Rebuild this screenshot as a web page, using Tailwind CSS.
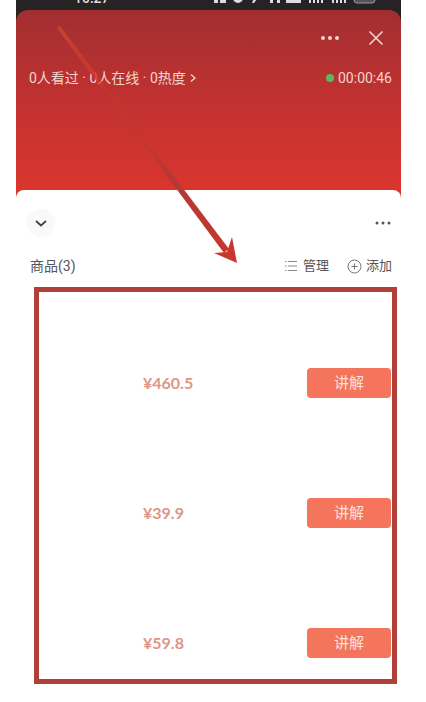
<!DOCTYPE html>
<html lang="zh-CN">
  <head>
    <meta charset="UTF-8" />
    <meta name="viewport" content="width=device-width, initial-scale=1.0" />
    <title>直播商品</title>
    <script src="https://cdn.jsdelivr.net/npm/@tailwindcss/browser@4"></script>
  </head>
  <body class="min-h-screen bg-white font-['Roboto','Noto_Sans_CJK_SC',sans-serif] text-[#555]">
    <div class="relative ml-4 mr-[25px] pb-4">
      <!-- red live header -->
      <div class="bg-[#272223]">
        <div class="flex h-[10px] items-end justify-between overflow-hidden pb-1 pl-[58px] pr-6 text-[#ddd]">
          <span class="text-sm leading-4 font-medium">10:27</span>
          <svg class="h-4 w-[164px] shrink-0" viewBox="0 0 164 16" fill="currentColor">
            <path d="M1 4h4v9H1zM7 4h6v9H7z" />
            <circle cx="25" cy="8" r="5" />
            <path d="M39 13l2-5 3 1-3 4zM57 10h3v3h-3zM64 10h3v3h-3zM73 4h15v9H73z" />
            <path d="M96 7h2v6h-2zM100 5h2v8h-2zM104 4h2v9h-2zM108 3h2v10h-2zM119 7h2v6h-2zM123 5h2v8h-2zM127 4h2v9h-2zM131 3h2v10h-2z" />
            <rect x="141" y="3" width="21" height="10" rx="3" fill="#555" stroke="#999" />
          </svg>
        </div>
        <header class="rounded-t-xl bg-linear-to-b from-[#a22e30] via-[#c23230] to-[#dc362e] px-[13px] pt-4 pb-[110px] text-[#f4d5ce]">
          <div class="flex h-6 items-center justify-end gap-7 pr-1">
            <button aria-label="更多">
              <svg class="h-5 w-5" viewBox="0 0 20 20" fill="currentColor">
                <circle cx="3" cy="10" r="2" />
                <circle cx="10" cy="10" r="2" />
                <circle cx="17" cy="10" r="2" />
              </svg>
            </button>
            <button aria-label="关闭">
              <svg class="h-4 w-4" viewBox="0 0 16 16" fill="none" stroke="currentColor" stroke-width="1.6">
                <path d="M1.500 1.500l13 13M14.500 1.500l-13 13" />
              </svg>
            </button>
          </div>
          <div class="-mr-1 mt-[18px] flex h-5 items-center justify-between text-sm">
            <a href="#" class="flex items-center gap-1">
              <span>0人看过 · 0人在线 · 0热度</span>
              <svg class="h-2 w-1.5" viewBox="0 0 6 8" fill="none" stroke="currentColor" stroke-width="1.3">
                <path d="M1 0.500L5 4L1 7.500" />
              </svg>
            </a>
            <div class="flex items-center gap-1">
              <span class="h-2 w-2 rounded-full bg-[#5cb85f]"></span>
              <span>00:00:46</span>
            </div>
          </div>
        </header>
      </div>

      <!-- product sheet -->
      <main class="-mt-2 rounded-t-lg bg-white pt-[19px]">
        <div class="flex items-center justify-between pl-[11px] pr-2">
          <button aria-label="收起" class="flex h-7 w-7 items-center justify-center rounded-full bg-[#f9f9f9]">
            <svg class="h-3 w-3" viewBox="0 0 12 12" fill="none" stroke="#444" stroke-width="1.8">
              <path d="M1 4l5 4.500L11 4" />
            </svg>
          </button>
          <button aria-label="更多">
            <svg class="h-5 w-5" viewBox="0 0 20 20" fill="#555">
              <circle cx="4" cy="10" r="1.500" />
              <circle cx="10" cy="10" r="1.500" />
              <circle cx="16" cy="10" r="1.500" />
            </svg>
          </button>
        </div>
        <div class="mt-[19px] flex h-5 items-center justify-between pl-[14px] pr-[9px] text-[13px]">
          <h1 class="text-sm">商品(3)</h1>
          <div class="flex gap-[18px]">
            <button class="flex items-center gap-1.5">
              <svg class="h-3 w-3" viewBox="0 0 12 12" fill="none" stroke="#888">
                <path d="M0 1.500h1.500M3 1.500h9M0 6h1.500M3 6h9M0 10.500h1.500M3 10.500h9" />
              </svg>
              管理
            </button>
            <button class="flex items-center gap-1">
              <svg class="h-[15px] w-[15px]" viewBox="0 0 15 15" fill="none" stroke="#777">
                <circle cx="7.500" cy="7.500" r="6.500" />
                <path d="M4.500 7.500h6M7.500 4.500v6" />
              </svg>
              添加
            </button>
          </div>
        </div>
        <ul class="ml-[18px] mr-1 mt-[11px] flex flex-col gap-[100px] border-5 border-[#b04039] pt-[76px] pr-px pb-[21px] pl-[104px]">
          <li class="flex items-center justify-between">
            <span class="font-['Lato','Noto_Sans_CJK_SC',sans-serif] text-base font-bold text-[#dc9686]">¥460.5</span>
            <button class="h-[30px] w-[84px] rounded bg-[#f4745c] text-[15px] text-[#fbe2dc]">讲解</button>
          </li>
          <li class="flex items-center justify-between">
            <span class="font-['Lato','Noto_Sans_CJK_SC',sans-serif] text-base font-bold text-[#dc9686]">¥39.9</span>
            <button class="h-[30px] w-[84px] rounded bg-[#f4745c] text-[15px] text-[#fbe2dc]">讲解</button>
          </li>
          <li class="flex items-center justify-between">
            <span class="font-['Lato','Noto_Sans_CJK_SC',sans-serif] text-base font-bold text-[#dc9686]">¥59.8</span>
            <button class="h-[30px] w-[84px] rounded bg-[#f4745c] text-[15px] text-[#fbe2dc]">讲解</button>
          </li>
        </ul>
      </main>

      <!-- arrow pointing at the list -->
      <svg class="pointer-events-none absolute top-0 left-0 h-[270px] w-[230px]" viewBox="0 0 230 270">
        <defs>
          <linearGradient id="shaft" gradientUnits="userSpaceOnUse" x1="42" y1="27" x2="212" y2="252">
            <stop offset="0" stop-color="#c8402f" />
            <stop offset="0.200" stop-color="#c8382f" />
            <stop offset="0.300" stop-color="#c8382f" stop-opacity="0.200" />
            <stop offset="0.500" stop-color="#b83732" stop-opacity="0.300" />
            <stop offset="0.700" stop-color="#b03a35" />
            <stop offset="1" stop-color="#c8372c" />
          </linearGradient>
        </defs>
        <path d="M41 28L44 26L213 249L208 253Z" fill="url(#shaft)" />
        <path d="M221 263L198 253L211 252L216 237Z" fill="#c8372c" />
      </svg>
    </div>
  </body>
</html>
